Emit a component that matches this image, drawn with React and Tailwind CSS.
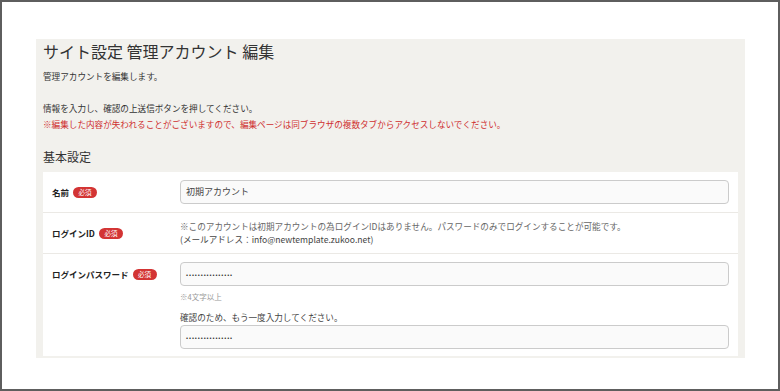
const Badge = () => (
  <span className="ml-[4px] inline-flex h-[11px] w-[24px] items-center justify-center rounded-full bg-[#d33434] text-[6.5px] font-normal leading-none text-white">
    必須
  </span>
);

const Field = ({ value, dots }) => (
  <div className="flex h-[24px] items-center rounded-[4px] border border-[#cbcbcb] bg-[#fafafa] px-[5px] text-[9px] text-[#444]">
    {dots ? (
      <span className="text-[6px] tracking-[0.9px] text-[#333]">••••••••••••••••</span>
    ) : (
      value
    )}
  </div>
);

export default function App() {
  return (
    <div
      className="h-[391px] w-[780px] overflow-hidden border-2 border-[#5e5e5e] bg-white pl-[34px] pt-[37px]"
      style={{ fontFamily: '"Noto Sans CJK JP", "Noto Sans", sans-serif' }}
    >
      <div className="w-[709px] bg-[#f2f1ed] px-[7px] pb-[2px] pt-[2px] text-[#333]">
        <h1 className="text-[16px] font-normal leading-[20px] text-[#333]">
          サイト設定 管理アカウント 編集
        </h1>
        <p className="mt-[8px] text-[8.6px] leading-[14px]">管理アカウントを編集します。</p>
        <div className="mt-[17px] text-[8.6px] leading-[16px]">
          <p>情報を入力し、確認の上送信ボタンを押してください。</p>
          <p className="text-[#cf2f2f]">
            ※編集した内容が失われることがございますので、編集ページは同ブラウザの複数タブからアクセスしないでください。
          </p>
        </div>
        <h2 className="mt-[17px] text-[12px] leading-[16px] text-[#333]">基本設定</h2>

        <div className="mt-[7px] bg-white">
          <div className="flex border-b border-[#ebe9e5] py-[8px]">
            <div className="flex h-[24px] w-[137px] shrink-0 items-center pl-[9px] text-[8.5px] font-bold text-[#222]">
              名前
              <Badge />
            </div>
            <div className="flex-1 pr-[9px]">
              <Field value="初期アカウント" />
            </div>
          </div>

          <div className="flex items-center border-b border-[#ebe9e5] py-[7px]">
            <div className="flex w-[137px] shrink-0 items-center pl-[9px] text-[8.5px] font-bold text-[#222]">
              ログインID
              <Badge />
            </div>
            <div className="flex-1 pr-[9px] text-[8.6px] leading-[13px]">
              <p className="text-[#666]">
                ※このアカウントは初期アカウントの為ログインIDはありません。パスワードのみでログインすることが可能です。
              </p>
              <p className="text-[#444]">(メールアドレス：info@newtemplate.zukoo.net)</p>
            </div>
          </div>

          <div className="flex pb-[7px] pt-[8px]">
            <div className="flex h-[24px] w-[137px] shrink-0 items-center pl-[9px] text-[8.5px] font-bold text-[#222]">
              ログインパスワード
              <Badge />
            </div>
            <div className="flex-1 pr-[9px]">
              <Field dots />
              <p className="mt-[5px] text-[7.5px] leading-[12px] text-[#999]">※4文字以上</p>
              <p className="mt-[7px] text-[8.6px] leading-[14px] text-[#444]">
                確認のため、もう一度入力してください。
              </p>
              <div className="mt-[1px]">
                <Field dots />
              </div>
            </div>
          </div>
        </div>
      </div>
    </div>
  );
}
